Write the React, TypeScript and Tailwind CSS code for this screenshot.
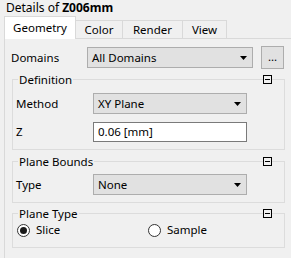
import React from "react";

const Arrow = () => (
  <svg width="7" height="4" viewBox="0 0 7 4" className="block">
    <path d="M0 0H7L3.5 4Z" fill="#000" />
  </svg>
);

const Collapse = () => (
  <div className="absolute right-[12px] top-[-5px] w-[9px] h-[9px] border border-black bg-[#f0f0f0] flex items-center justify-center">
    <div className="w-[5px] h-px bg-black" />
  </div>
);

const Select = ({ value, w }: { value: string; w: string }) => (
  <div className={`${w} h-[21px] bg-[#e1e1e1] border border-[#adadad] flex items-center justify-between pl-[4px] pr-[5px]`}>
    <span>{value}</span>
    <Arrow />
  </div>
);

export default function App() {
  return (
    <div
      className="w-[291px] h-[258px] bg-[#f0f0f0] overflow-hidden text-[11.5px] leading-none text-black flex flex-col"
      style={{ fontFamily: '"Noto Sans", sans-serif' }}
    >
      <div className="h-[16px] pl-[6px] pt-[2px] text-[12px]">
        Details of <span className="font-bold">Z006mm</span>
      </div>
      <div className="flex items-end h-[22px] pl-[4px]">
        <div className="relative z-10 h-[23px] -mb-px w-[72px] bg-white border-l border-t border-r border-[#d9d9d9] flex items-center justify-center">
          Geometry
        </div>
        <div className="h-[18px] w-[47px] border-t border-r border-[#d9d9d9] flex items-center justify-center">
          Color
        </div>
        <div className="h-[18px] w-[60px] border-t border-r border-[#d9d9d9] flex items-center justify-center">
          Render
        </div>
        <div className="h-[18px] w-[44px] border-t border-r border-[#d9d9d9] flex items-center justify-center">
          View
        </div>
      </div>
      <div className="flex-1 ml-[4px] border-l border-t border-[#d9d9d9] pl-[6px] pt-[7px]">
        <div className="flex items-center h-[23px]">
          <div className="w-[76px]">Domains</div>
          <Select value="All Domains" w="w-[166px]" />
          <div className="ml-[8px] w-[23px] h-[23px] border border-[#adadad] bg-[#e1e1e1] flex items-end justify-center pb-[6px]">
            ...
          </div>
        </div>

        <div className="relative ml-[1px] mt-[10px] w-[273px] border border-[#dcdcdc] pl-[3px] pt-[13px] pb-[7px]">
          <span className="absolute left-[5px] top-[-6px] px-px bg-[#f0f0f0]">Definition</span>
          <Collapse />
          <div className="flex items-center">
            <div className="w-[77px]">Method</div>
            <Select value="XY Plane" w="w-[154px]" />
          </div>
          <div className="flex items-center mt-[8px]">
            <div className="w-[77px]">Z</div>
            <div className="w-[154px] h-[20px] bg-white border border-[#7a7a7a] flex items-center pl-[4px]">
              0.06 [mm]
            </div>
          </div>
        </div>

        <div className="relative ml-[1px] mt-[11px] w-[273px] border border-[#dcdcdc] pl-[3px] pt-[12px] pb-[7px]">
          <span className="absolute left-[5px] top-[-6px] px-px bg-[#f0f0f0]">Plane Bounds</span>
          <Collapse />
          <div className="flex items-center">
            <div className="w-[77px]">Type</div>
            <Select value="None" w="w-[154px]" />
          </div>
        </div>

        <div className="relative ml-[1px] mt-[10px] w-[273px] h-[35px] border border-[#dcdcdc] pl-[4px] pt-[9px]">
          <span className="absolute left-[5px] top-[-6px] px-px bg-[#f0f0f0]">Plane Type</span>
          <Collapse />
          <div className="flex items-center h-[14px]">
            <div className="flex items-center w-[131px]">
              <div className="w-[13px] h-[13px] rounded-full border border-[#333] bg-white flex items-center justify-center">
                <div className="w-[7px] h-[7px] rounded-full bg-[#1a1a1a]" />
              </div>
              <span className="ml-[6px]">Slice</span>
            </div>
            <div className="flex items-center">
              <div className="w-[13px] h-[13px] rounded-full border border-[#333] bg-white" />
              <span className="ml-[6px]">Sample</span>
            </div>
          </div>
        </div>
      </div>
    </div>
  );
}
